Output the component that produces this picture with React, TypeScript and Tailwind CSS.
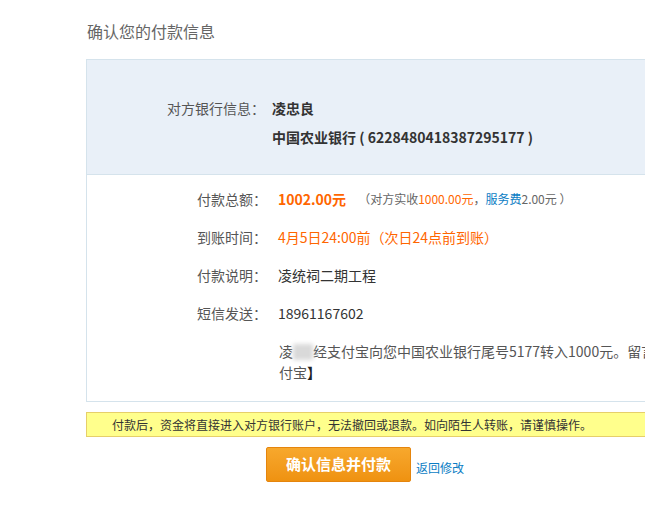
import React from 'react';

const font = { fontFamily: '"Noto Sans CJK SC", "Liberation Sans", sans-serif' };

function Row({ label, children }: { label: string; children: React.ReactNode }) {
  return (
    <div className="flex h-[38px] items-center">
      <div className="w-[180px] text-right text-[#555]">{label}：</div>
      <div className="ml-[11px] flex items-center text-[#333]">{children}</div>
    </div>
  );
}

export default function App() {
  return (
    <div className="h-[518px] w-[645px] overflow-hidden bg-white text-[14px]" style={font}>
      <div className="pl-[87px] pt-[21px] text-[16px] leading-[20px] text-[#666]">确认您的付款信息</div>

      <div className="ml-[86px] mt-[18px] w-[720px] border border-[#d5e3ec]">
        {/* header */}
        <div className="border-b border-[#d5e3ec] bg-[#e9f0f8] pb-[22px] pt-[34px] leading-[29px]">
          <div className="flex">
            <div className="w-[178px] text-right text-[#555]">对方银行信息：</div>
            <div className="pl-[7px] font-bold text-[#333]">
              <div>凌忠良</div>
              <div>中国农业银行 ( 6228480418387295177 )</div>
            </div>
          </div>
        </div>

        {/* body */}
        <div className="pb-[18px] pt-[5px]">
          <Row label="付款总额">
            <span className="font-bold text-[#ff6600]">1002.00元</span>
            <span className="ml-[12px] text-[12px] text-[#666]">
              （对方实收<span className="text-[#ff6600]">1000.00元</span>，
              <span className="text-[#0b7dc4]">服务费</span>2.00元 ）
            </span>
          </Row>
          <Row label="到账时间">
            <span className="text-[#ff6600]">4月5日24:00前（次日24点前到账）</span>
          </Row>
          <Row label="付款说明">凌统祠二期工程</Row>
          <Row label="短信发送">18961167602</Row>
          <div className="mt-[9px] pl-[192px] leading-[21px] text-[#555]">
            <div className="whitespace-nowrap">
              凌
              <span className="inline-block h-[16px] w-[20px] translate-y-[3px] bg-[#d9d9d9] blur-[2px]" />
              经支付宝向您中国农业银行尾号5177转入1000元。留言：凌统祠二期工程【支
            </div>
            <div>
              付宝<span className="font-bold text-[#222]">】</span>
            </div>
          </div>
        </div>
      </div>

      {/* warning */}
      <div className="ml-[86px] mt-[10px] flex h-[25px] w-[720px] items-center border border-[#e6cf6a] bg-[#ffff8c] pl-[25px] text-[12px] text-[#333]">
        付款后，资金将直接进入对方银行账户，无法撤回或退款。如向陌生人转账，请谨慎操作。
      </div>

      {/* actions */}
      <div className="mt-[10px] flex items-center pl-[266px]">
        <button className="h-[35px] w-[145px] rounded-[2px] border border-[#e5850d] bg-gradient-to-b from-[#f7a82c] to-[#ef9210] text-[15px] font-bold text-white">
          确认信息并付款
        </button>
        <a className="ml-[5px] mt-[6px] text-[12px] text-[#0b7dc4]">返回修改</a>
      </div>
    </div>
  );
}
